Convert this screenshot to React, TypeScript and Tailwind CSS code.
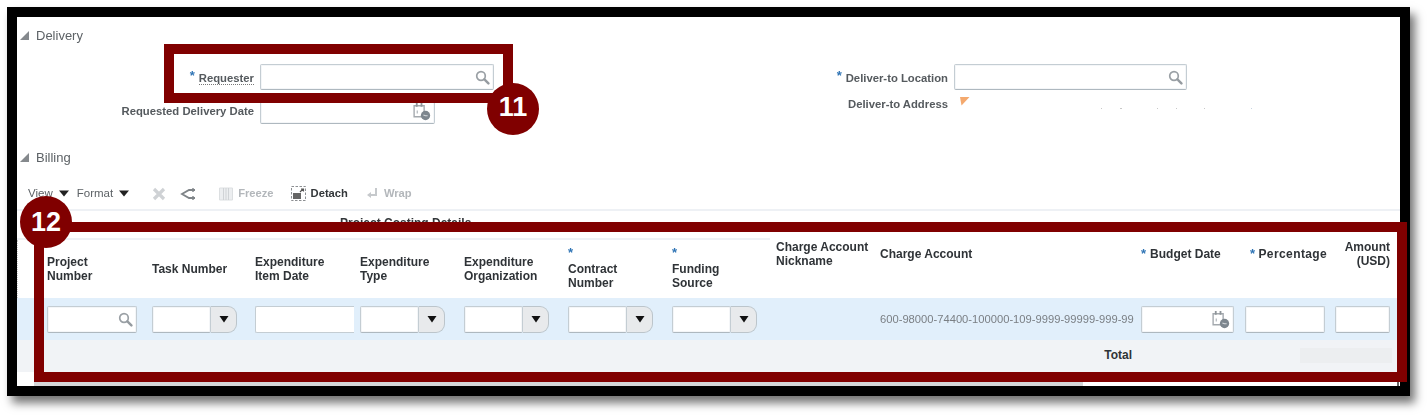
import React from "react";

const GRID = "grid grid-cols-[105px_103px_105px_104px_104px_104px_104px_104px_261px_104px_90px_55px] pl-[29px]";

function Star({ className = "" }: { className?: string }) {
  return <span className={`text-[#2f74b5] font-bold text-[13px] leading-[14px] ${className}`}>*</span>;
}

function SearchIcon() {
  return (
    <svg width="15" height="15" viewBox="0 0 15 15" fill="none">
      <circle cx="6" cy="6" r="4.3" stroke="#9aa0a5" strokeWidth="1.7" fill="#fff" />
      <path d="M9.4 9.4L13.4 13.4" stroke="#959ba0" strokeWidth="2.4" strokeLinecap="round" />
    </svg>
  );
}

function CalIcon() {
  return (
    <svg width="19" height="19" viewBox="0 0 18 18" fill="none">
      <path d="M2 3.5h9.5v10.5H2z" stroke="#a4a9ae" strokeWidth="1.3" fill="#fff" />
      <path d="M4.5 1v3.5M9 1v3.5" stroke="#8f959a" strokeWidth="1.7" />
      <path d="M5 8v3" stroke="#b5babf" strokeWidth="1.2" />
      <circle cx="12.8" cy="12.8" r="4.4" fill="#7d868e" />
      <path d="M10.8 12.3l2 .8h2" stroke="#d5d9dc" strokeWidth="1" />
    </svg>
  );
}

const boxCls = "bg-white border border-[#c4cdd3] border-b-[#aeb8bf] rounded-[2px] shadow-[inset_0_0_0_1px_#f4f6f8]";

function LookupInput({ w }: { w: string }) {
  return (
    <div className={`${boxCls} ${w} flex items-center justify-end pr-[3px]`}>
      <SearchIcon />
    </div>
  );
}

function DateInput({ w }: { w: string }) {
  return (
    <div className={`${boxCls} ${w} flex items-center justify-end pr-[3px]`}>
      <CalIcon />
    </div>
  );
}

function SelectInput({ field }: { field: string }) {
  return (
    <div className="flex h-[27px]">
      <div className={`${boxCls} h-[27px] ${field}`} />
      <div className="w-[26px] h-[27px] bg-[#e8eaec] border border-l-0 border-[#bcc5cb] rounded-r-[9px] flex items-center justify-center">
        <svg width="10" height="8" viewBox="0 0 10 8"><path d="M0.5 1h9L5 7.5z" fill="#111" /></svg>
      </div>
    </div>
  );
}

function Caret() {
  return <svg width="10" height="7" viewBox="0 0 10 7"><path d="M0 0.5h10L5 6.5z" fill="#222" /></svg>;
}

function Disclosure({ label }: { label: string }) {
  return (
    <div className="h-[36px] flex items-center pl-[3px] pt-px">
      <svg width="9" height="9" viewBox="0 0 9 9"><path d="M9 0v9H0z" fill="#85898d" /></svg>
      <span className="ml-[7px] text-[13px] text-[#5d6266]">{label}</span>
    </div>
  );
}

function FormLabel({ children, w }: { children: React.ReactNode; w: string }) {
  return <div className={`${w} text-right pr-[6px] text-[11.3px] font-bold text-[#555a5e] leading-[14px]`}>{children}</div>;
}

const Head = ({ children }: { children: React.ReactNode }) => (
  <div className="text-[12px] font-bold leading-[14px] text-[#2f3337]">{children}</div>
);

export default function App() {
  return (
    <div className="relative w-[1427px] h-[415px] bg-white pt-[7px] pl-[7px] overflow-hidden font-['Liberation_Sans',Arial,sans-serif]">
      <div className="w-[1403px] h-[389px] border-[10px] border-black bg-white shadow-[5px_7px_9px_rgba(0,0,0,0.55)]">
        <div className="h-full flex flex-col blur-[0.5px]">
          <Disclosure label="Delivery" />

          <div className="h-[86px] flex pt-[11px]">
            <div className="w-[813px] flex flex-col">
              <div className="flex items-center h-[26px]">
                <FormLabel w="w-[243px]">
                  <Star className="mr-[4px] align-[2px]" />
                  <span className="border-b border-dotted border-[#777]">Requester</span>
                </FormLabel>
                <LookupInput w="w-[234px] h-[26px]" />
              </div>
              <div className="flex items-center h-[26px] mt-[8px]">
                <FormLabel w="w-[243px]">Requested Delivery Date</FormLabel>
                <DateInput w="w-[175px] h-[26px]" />
              </div>
            </div>
            <div className="flex flex-col">
              <div className="flex items-center h-[26px]">
                <FormLabel w="w-[124px]">
                  <Star className="mr-[4px] align-[2px]" />
                  Deliver-to Location
                </FormLabel>
                <LookupInput w="w-[233px] h-[26px]" />
              </div>
              <div className="flex h-[26px] mt-[7px]">
                <FormLabel w="w-[124px]"><span className="block">Deliver-to Address</span></FormLabel>
                <svg width="10" height="9" viewBox="0 0 10 9" className="ml-[6px]"><path d="M0 0h9.5L1.5 8.5z" fill="#f4a96e" /></svg>
                <div className="flex items-start mt-[11px] ml-[131px] gap-[18px]">
                  <span className="w-px h-px bg-[#c8c8c8]" />
                  <span className="w-[2px] h-px bg-[#c8c8c8]" />
                  <span className="w-px h-px bg-[#c8c8c8] ml-[17px]" />
                  <span className="w-px h-px bg-[#c8c8c8]" />
                  <span className="w-px h-px bg-[#c8c8c8] ml-[9px]" />
                  <span className="w-px h-px bg-[#c8d4e0] ml-[28px]" />
                </div>
              </div>
            </div>
          </div>

          <Disclosure label="Billing" />

          <div className="h-[36px] border-b-2 border-[#eef1f5] flex items-center pl-[11px] pt-[3px] text-[11.5px] text-[#5d6266]">
            <span>View</span>
            <span className="ml-[6px]"><Caret /></span>
            <span className="ml-[8px]">Format</span>
            <span className="ml-[6px]"><Caret /></span>
            <svg width="14" height="14" viewBox="0 0 14 14" className="ml-[23px]"><path d="M2 2l10 10M12 2L2 12" stroke="#cfd2d5" strokeWidth="3.2" /></svg>
            <svg width="16" height="14" viewBox="0 0 16 14" className="ml-[14px]"><path d="M15 3H9L2 7l7 4h6" stroke="#7f8488" strokeWidth="1.8" fill="none" /><path d="M13 1v4M13 9v4" stroke="#7f8488" strokeWidth="1.4" /></svg>
            <svg width="14" height="14" viewBox="0 0 14 14" className="ml-[23px]"><path d="M0.5 1h13v12H0.5z" fill="#eceef0" stroke="#dcdfe1" /><path d="M4.5 1v12M7 1v12M9.5 1v12" stroke="#d0d3d6" /></svg>
            <span className="ml-[5px] text-[11.2px] font-bold text-[#b3b7bb]">Freeze</span>
            <svg width="15" height="15" viewBox="0 0 15 15" className="ml-[17px]"><path d="M0.5 0.5h14v14H0.5z" fill="none" stroke="#8c8f92" strokeDasharray="2.5 1.5" /><path d="M2 7h8v6H2z" fill="#666" /><path d="M9 6l3-3M10 3h2.5v2.5" stroke="#555" strokeWidth="1.2" fill="none" /></svg>
            <span className="ml-[5px] text-[11.2px] font-bold text-[#33373a]">Detach</span>
            <svg width="13" height="13" viewBox="0 0 13 13" className="ml-[18px]"><path d="M10 1v7H4" stroke="#c6c9cc" strokeWidth="2" fill="none" /><path d="M5 5L1 8l4 3z" fill="#c6c9cc" /></svg>
            <span className="ml-[5px] text-[11.2px] font-bold text-[#b3b7bb]">Wrap</span>
          </div>

          <div className="h-[29px] border-b-2 border-[#eef1f5] pl-[323px] pt-[5px] mr-[630px] text-[12px] font-bold text-[#33373a] leading-[14px]">
            Project Costing Details
          </div>

          <div className={`${GRID} h-[58px] border-l border-dotted border-[#c9c9c9]`}>
            <div className="pt-[15px]"><Head>Project<br />Number</Head></div>
            <div className="pt-[22px]"><Head>Task Number</Head></div>
            <div className="pt-[15px]"><Head>Expenditure<br />Item Date</Head></div>
            <div className="pt-[15px]"><Head>Expenditure<br />Type</Head></div>
            <div className="pt-[15px]"><Head>Expenditure<br />Organization</Head></div>
            <div className="pt-[6px]"><Star className="block h-[16px]" /><Head>Contract<br />Number</Head></div>
            <div className="pt-[6px]"><Star className="block h-[16px]" /><Head>Funding<br />Source</Head></div>
            <div><Head>Charge Account<br />Nickname</Head></div>
            <div className="pt-[7px]"><Head>Charge Account</Head></div>
            <div className="pt-[7px]"><Head><Star className="mr-[4px]" />Budget Date</Head></div>
            <div className="pt-[7px] pl-[5px] whitespace-nowrap tracking-[0.4px]"><Head><Star className="mr-[3px]" />Percentage</Head></div>
            <div className="text-right"><Head>Amount<br />(USD)</Head></div>
          </div>

          <div className="h-[42px] bg-[#e1effb] pl-px">
            <div className={`${GRID} h-full items-center`}>
              <LookupInput w="w-[90px] h-[27px]" />
              <SelectInput field="w-[59px]" />
              <div className="h-[27px] w-[99px] bg-white border border-r-0 border-[#c4cdd3] rounded-l-[2px]" />
              <SelectInput field="w-[59px]" />
              <SelectInput field="w-[59px]" />
              <SelectInput field="w-[59px]" />
              <SelectInput field="w-[59px]" />
              <div />
              <div className="text-[11.2px] text-[#7a7f84] whitespace-nowrap">600-98000-74400-100000-109-9999-99999-999-99</div>
              <DateInput w="w-[93px] h-[27px]" />
              <div className={`${boxCls} w-[80px] h-[27px]`} />
              <div className={`${boxCls} w-[55px] h-[27px]`} />
            </div>
          </div>

          <div className="h-[32px] bg-[#f1f3f6] flex items-center justify-end pr-[8px] pb-[2px]">
            <span className="text-[12px] font-bold text-[#2f3337] mr-[168px]">Total</span>
            <div className="w-[92px] h-[15px] bg-[#eceef0]" />
          </div>

          <div className="flex-1 bg-white flex">
            <div className="w-[17px]" />
            <div className="w-[1049px] bg-[#d4d6d8]" />
            <div className="ml-auto w-[2px] mr-px bg-[#666]" />
          </div>
        </div>
      </div>

      <div className="absolute left-[164px] top-[44px] w-[349px] h-[59px] border-[10px] border-[#800000]" />
      <div className="absolute left-[487px] top-[83px] w-[52px] h-[52px] rounded-full bg-[#800000] flex items-center justify-center pb-[3px] text-white font-bold text-[27px]">11</div>
      <div className="absolute left-[34px] top-[222px] w-[1373px] h-[160px] border-[10px] border-[#800000]" />
      <div className="absolute left-[20px] top-[196px] w-[52px] h-[52px] rounded-full bg-[#800000] flex items-center justify-center text-white font-bold text-[27px]">12</div>
    </div>
  );
}
